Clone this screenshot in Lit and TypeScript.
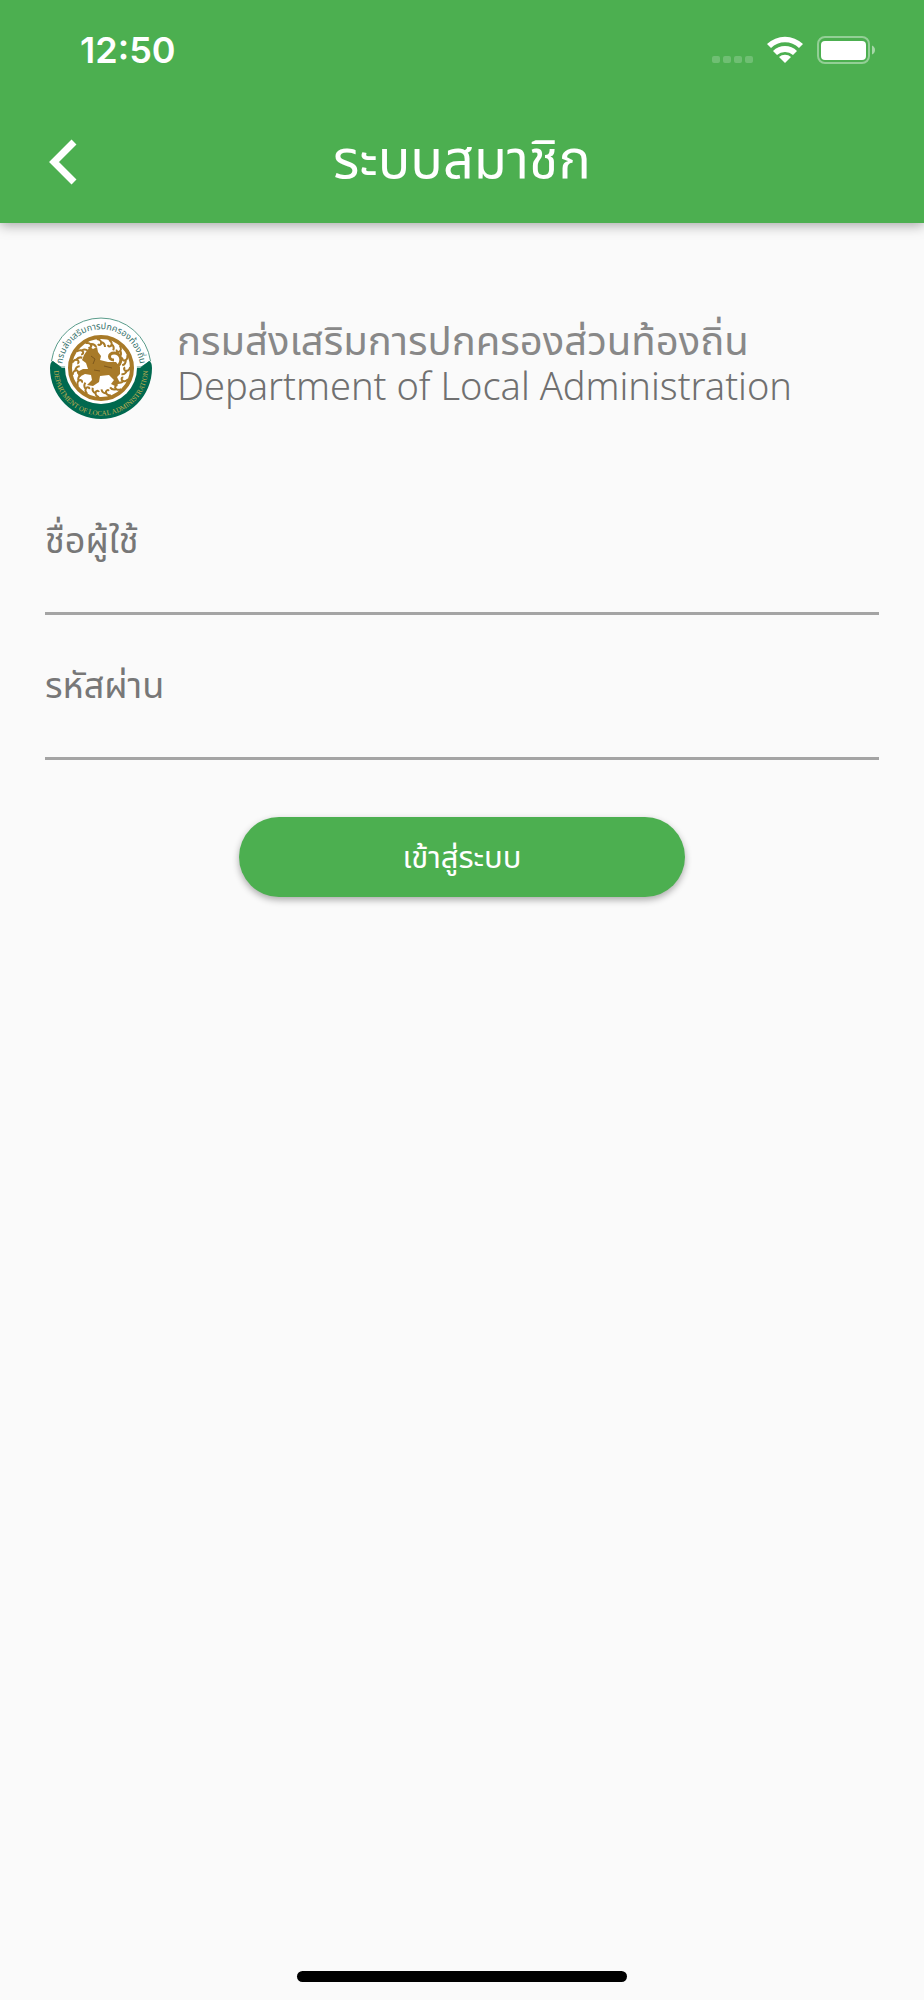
import { LitElement, html, svg, css } from "lit";
import { customElement } from "lit/decorators.js";

const flames = Array.from({ length: 15 }, (_, i) => i * 24);

@customElement("dla-seal")
export class DlaSeal extends LitElement {
  static styles = css`
    :host { display: block; width: 102px; height: 102px; }
    svg { display: block; width: 100%; height: 100%; }
    .thai { font: 9px "Noto Sans Thai", "Noto Sans", sans-serif; fill: #35706a; }
    .latin { font: 7px "Liberation Serif", serif; fill: #c4b050; }
  `;
  render() {
    return html`<svg viewBox="0 0 102 102" role="img" aria-label="กรมส่งเสริมการปกครองส่วนท้องถิ่น">
      <defs>
        <path id="top" d="M13 60A39 39 0 1 1 89 60" />
        <path id="bottom" d="M6 38A47 47 0 1 0 96 38" />
      </defs>
      <path d="M1.500 44A50 50 0 0 1 100.500 44L91 50H11Z" fill="#fff" stroke="#5a9c8b" stroke-width="1" />
      <path d="M0 51Q0 45 3 44L12 51H90L99 44Q102 45 102 51A51 51 0 0 1 0 51Z" fill="#00694f" />
      <circle cx="51" cy="51" r="36" fill="#fff" />
      <circle cx="51" cy="51" r="31" fill="#fff" stroke="#a87a28" stroke-width="4" />
      ${flames.map((a) => svg`<path transform="rotate(${a} 51 51)" d="M47 22Q52 23 51 27Q49 29 48 27M51 25Q55 26 55 30" fill="none" stroke="#a87a28" stroke-width="2"/>`)}
      <path d="M36 35L40 30L43 32L47 30L48 35L51 39L50 43L58 45L66 45L70 50L70 57L67 60L70 66L65 69L61 67L64 63L59 58L50 59L49 65L43 69L37 68L42 63L41 58L35 57L29 60L27 55L33 52L38 52L36 46L32 43L34 38Z" fill="#a87a28" />
      <path d="M68 49C73 44 71 36 64 36C58 36 58 43 64 43" fill="none" stroke="#a87a28" stroke-width="3" />
      <path d="M41 39L45 42L43 47M54 49L62 51M44 53L50 54" fill="none" stroke="#7d571c" stroke-width="1" />
      <text class="thai"><textPath href="#top" startOffset="50%" text-anchor="middle">กรมส่งเสริมการปกครองท้องถิ่น</textPath></text>
      <text class="latin"><textPath href="#bottom" startOffset="50%" text-anchor="middle">DEPARTMENT OF LOCAL ADMINISTRATION</textPath></text>
    </svg>`;
  }
}

@customElement("app-root")
export class AppRoot extends LitElement {
  static styles = css`
    * { box-sizing: border-box; }
    :host {
      display: flex; flex-direction: column; min-height: 100vh;
      background: #fafafa; color: #888;
      font-family: "Noto Sans Thai", "Noto Sans", sans-serif;
    }
    .top { background: #4caf50; color: #fff; box-shadow: 0 2px 12px rgba(0, 0, 0, 0.36); }
    .status { display: flex; justify-content: space-between; align-items: center; height: 100px; padding: 0 48px 0 80px; }
    .time { font: 600 36px/40px Inter, sans-serif; }
    .indicators { display: flex; align-items: center; gap: 14px; }
    .indicators svg { display: block; }
    .bar { display: grid; grid-template-columns: 72px 1fr 72px; align-items: center; height: 123px; padding: 0 27px; }
    .back { width: 72px; height: 72px; padding: 0; border: 0; background: none; color: inherit; }
    .back svg { display: block; margin: 0 auto; }
    h1 { margin: 0; font-size: 54px; line-height: 72px; font-weight: 400; text-align: center; }
    main { flex: 1; padding: 94px 45px 0; }
    .brand { display: flex; align-items: center; gap: 25px; padding-left: 5px; }
    .brand p { margin: 0; padding-bottom: 4px; line-height: 46px; }
    .name { display: block; }
    .name:lang(th) { font-size: 40px; }
    .name:lang(en) { font-size: 38px; font-weight: 300; color: #707070; }
    form { display: flex; flex-direction: column; margin-top: 99px; }
    .field { display: flex; flex-direction: column; height: 145px; color: #777; font-size: 36px; line-height: 48px; }
    .field input { height: 49px; padding: 0; border: 0; border-bottom: 3px solid #a4a4a4; background: none; font: inherit; outline: none; }
    .submit {
      align-self: center; width: 446px; max-width: 100%; height: 80px; margin-top: 9px; padding: 2px 0 0; border: 0; border-radius: 40px;
      background: #4caf50; color: #fff; font: inherit; font-size: 31px; box-shadow: 0 3px 7px rgba(0, 0, 0, 0.32);
    }
    .home { align-self: center; width: 330px; height: 11px; margin-bottom: 18px; border-radius: 6px; background: #000; }
  `;
  render() {
    return html`
      <header class="top">
        <div class="status">
          <span class="time">12:50</span>
          <div class="indicators">
            <svg width="41" height="28" viewBox="0 0 41 28" fill="#fff" fill-opacity=".2"><rect y="20" width="8" height="7" rx="2"/><rect x="11" y="20" width="8" height="7" rx="2"/><rect x="22" y="20" width="8" height="7" rx="2"/><rect x="33" y="20" width="8" height="7" rx="2"/></svg>
            <svg width="36" height="28" viewBox="0 0 36 28" fill="#fff"><path d="M0 8A26 26 0 0 1 36 8L32 12A20 20 0 0 0 4 12Z"/><path d="M6 15A17 17 0 0 1 30 15L26 19A12 12 0 0 0 10 19Z"/><path d="M12 21A9 9 0 0 1 24 21L18 27Z"/></svg>
            <svg width="59" height="28" viewBox="0 0 59 28"><rect x="1" y="1" width="51" height="26" rx="7" fill="none" stroke="#fff" stroke-opacity=".4" stroke-width="2"/><rect x="4" y="5" width="45" height="19" rx="4" fill="#fff"/><path d="M55 9.500Q58 11 58 14T55 18.500Z" fill="#fff" fill-opacity=".5"/></svg>
          </div>
        </div>
        <div class="bar">
          <button class="back" type="button" aria-label="กลับ"><svg width="28" height="46" viewBox="0 0 28 46"><path d="M25 3L5 23L25 43" fill="none" stroke="#fff" stroke-width="7"/></svg></button>
          <h1>ระบบสมาชิก</h1>
        </div>
      </header>
      <main>
        <div class="brand"><dla-seal></dla-seal><p><span class="name" lang="th">กรมส่งเสริมการปกครองส่วนท้องถิ่น</span><span class="name" lang="en">Department of Local Administration</span></p></div>
        <form>
          <div class="field"><label for="user">ชื่อผู้ใช้</label><input id="user" type="text" /></div>
          <div class="field"><label for="pass">รหัสผ่าน</label><input id="pass" type="password" /></div>
          <button class="submit" type="button">เข้าสู่ระบบ</button>
        </form>
      </main>
      <div class="home"></div>
    `;
  }
}
